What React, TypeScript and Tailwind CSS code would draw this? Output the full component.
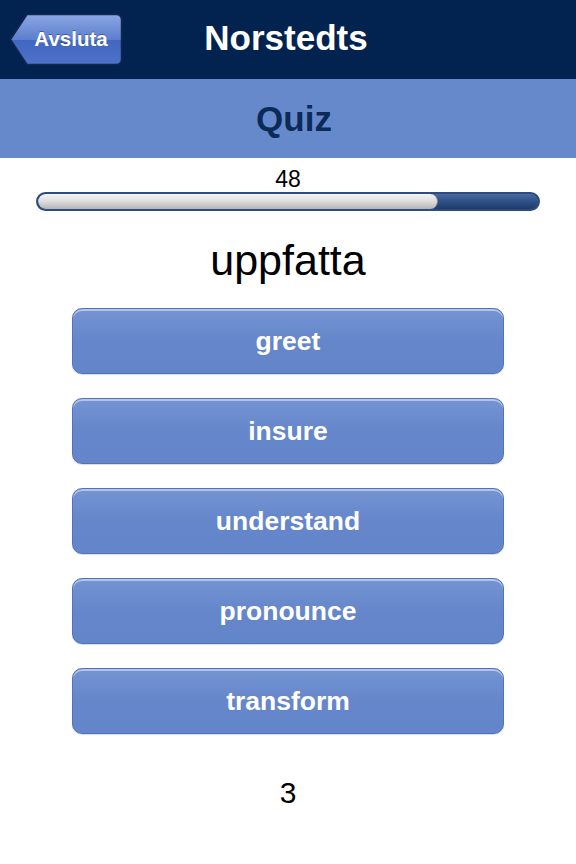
import { useState } from 'react';

const answers = ['greet', 'insure', 'understand', 'pronounce', 'transform'];

function BackButton() {
  return (
    <button className="relative h-[53px] w-[114px] ml-[9px]">
      <svg width="114" height="53" viewBox="0 0 114 53" className="absolute inset-0">
        <defs>
          <linearGradient id="back" x1="0" y1="0" x2="0" y2="1">
            <stop offset="0" stopColor="#8aa6e2" />
            <stop offset="0.5" stopColor="#5d7fcf" />
            <stop offset="0.52" stopColor="#4267c2" />
            <stop offset="1" stopColor="#4d72c9" />
          </linearGradient>
        </defs>
        <path
          d="M18 1.5 H107 Q112.5 1.5 112.5 7 V46 Q112.5 51.5 107 51.5 H18 L1.5 26.5 Z"
          fill="url(#back)"
          stroke="#14284f"
          strokeWidth="1.5"
        />
      </svg>
      <span className="relative block pl-[10px] text-[20.5px] font-bold text-white leading-none [text-shadow:0_-1px_0_rgba(0,0,0,0.35)]">
        Avsluta
      </span>
    </button>
  );
}

function ProgressBar({ value }: { value: number }) {
  return (
    <div className="mx-[36px] h-[19px] rounded-full border-2 border-[#2d4c7d] bg-gradient-to-b from-[#4a6b9f] via-[#2f5088] to-[#1f3b69] overflow-hidden">
      <div
        className="h-full rounded-full bg-gradient-to-b from-[#f4f4f4] via-[#dcdcdc] to-[#b4b4b4] border-r border-[#8b8b8b]"
        style={{ width: `${value}%` }}
      />
    </div>
  );
}

export default function App() {
  const [selected, setSelected] = useState<string | null>(null);

  return (
    <div className="w-[576px] h-[864px] bg-white font-['Liberation_Sans',Arial,sans-serif] overflow-hidden">
      {/* Top bar */}
      <div className="relative h-[79px] bg-[#022350] flex items-center">
        <BackButton />
        <h1 className="absolute left-0 right-0 top-[20px] pr-[4px] text-center text-[35px] font-bold leading-none text-white pointer-events-none">
          Norstedts
        </h1>
      </div>

      {/* Section header */}
      <div className="h-[79px] bg-[#6689cc] flex items-center justify-center pl-[12px]">
        <h2 className="text-[35px] font-bold text-[#0b2a57] leading-none">Quiz</h2>
      </div>

      <div className="pt-[10px]">
        <div className="text-center text-[23px] leading-[23px] text-black">48</div>
        <div className="mt-[1px]">
          <ProgressBar value={80} />
        </div>

        <div className="mt-[25px] text-center text-[43px] leading-[48px] text-black">uppfatta</div>

        <div className="mt-[24px] flex flex-col gap-[24px] items-center">
          {answers.map((a) => (
            <button
              key={a}
              onClick={() => setSelected(a)}
              className={
                'w-[432px] h-[66px] rounded-[10px] border border-[#5273b8] bg-gradient-to-b from-[#7494d3] via-[#6586ca] to-[#6385c9] text-white text-[26.5px] font-bold pt-[2px] shadow-[inset_0_2px_0_rgba(255,255,255,0.45),0_1px_1px_rgba(0,0,0,0.15)] ' +
                (selected === a ? 'brightness-95' : '')
              }
            >
              {a}
            </button>
          ))}
        </div>

        <div className="mt-[44px] text-center text-[30px] leading-none text-black">3</div>
      </div>
    </div>
  );
}
